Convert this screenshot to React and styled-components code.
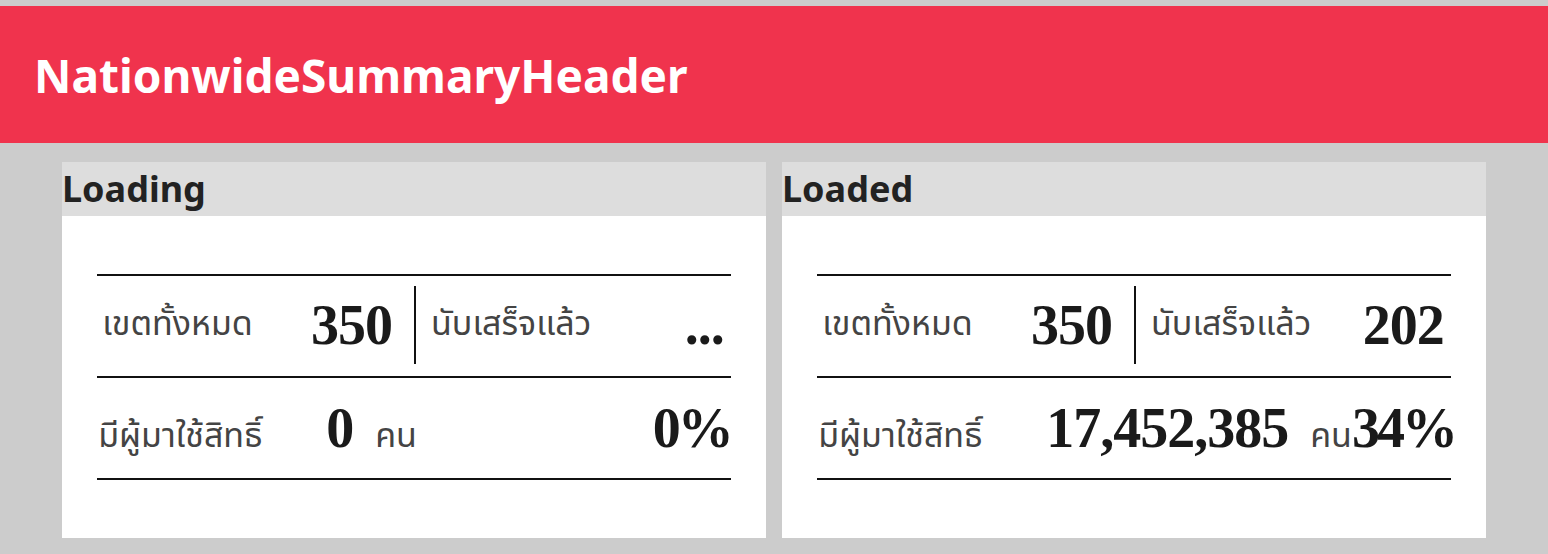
import React from 'react';
import styled, { createGlobalStyle } from 'styled-components';

const GlobalStyle = createGlobalStyle`
  html, body {
    margin: 0;
    padding: 0;
    background: #cccccc;
    font-family: "Noto Sans", "Open Sans", sans-serif;
  }
`;

const Page = styled.div`
  padding-top: 6px;
  padding-bottom: 16px;
`;

const Header = styled.header`
  height: 137px;
  background: #f0334d;
  display: flex;
  align-items: center;
  padding: 0 34px;
`;

const HeaderTitle = styled.h1`
  margin: 0;
  color: #ffffff;
  font-size: 46px;
  font-weight: 700;
  line-height: 1;
`;

const Cards = styled.div`
  display: grid;
  grid-template-columns: 1fr 1fr;
  gap: 16px;
  padding: 19px 62px 0;
`;

const Card = styled.section`
  background: #ffffff;
`;

const CardTitle = styled.h2`
  margin: 0;
  background: #dddddd;
  color: #222222;
  font-size: 36px;
  font-weight: 700;
  line-height: 54px;
  height: 54px;
`;

const Summary = styled.div`
  width: 90%;
  margin: 0 auto;
  padding: 58px 0 58px;
`;

const Row = styled.div`
  display: flex;
  align-items: ${(p) => (p.$split ? 'stretch' : 'center')};
  height: ${(p) => (p.$last ? '104px' : '102px')};
  border-top: 2px solid #111111;
  border-bottom: ${(p) => (p.$last ? '2px solid #111111' : 'none')};
  padding: ${(p) => (p.$split ? '10px 0 12px' : '0')};
  box-sizing: border-box;
`;

const Half = styled.div`
  flex: 0 0 50%;
  box-sizing: border-box;
  display: flex;
  align-items: center;
  justify-content: space-between;
  padding: ${(p) => (p.$right ? '0 7px 0 15px' : '0 22px 0 5px')};
  border-left: ${(p) => (p.$right ? '2px solid #111111' : 'none')};
`;

const Label = styled.span`
  color: #444444;
  font-family: "Noto Sans Thai", "Noto Sans Thai UI", "Noto Sans", sans-serif;
  font-size: 34px;
  line-height: 1;
  width: ${(p) => p.$width || 'auto'};
  flex-shrink: 0;
`;

const Unit = styled(Label)`
  margin-left: 22px;
`;

const Num = styled.span`
  font-family: "Liberation Serif", "Times New Roman", serif;
  font-weight: 700;
  font-size: 56px;
  letter-spacing: -1px;
  line-height: 1;
  color: #1a1a1a;
`;

const Percent = styled(Num)`
  flex: 1;
  text-align: right;
  white-space: nowrap;
  letter-spacing: -3px;
`;

const Voters = styled.div`
  display: flex;
  align-items: baseline;
  width: 100%;
  padding-left: 1px;
`;

function SummaryCard({ title, counted, voters, percent }) {
  return (
    <Card>
      <CardTitle>{title}</CardTitle>
      <Summary>
        <Row $split>
          <Half>
            <Label>เขตทั้งหมด</Label>
            <Num>350</Num>
          </Half>
          <Half $right>
            <Label>นับเสร็จแล้ว</Label>
            <Num>{counted}</Num>
          </Half>
        </Row>
        <Row $last>
          <Voters>
            <Label $width="228px">มีผู้มาใช้สิทธิ์</Label>
            <Num>{voters}</Num>
            <Unit>คน</Unit>
            <Percent>{percent}</Percent>
          </Voters>
        </Row>
      </Summary>
    </Card>
  );
}

export default function App() {
  return (
    <Page>
      <GlobalStyle />
      <Header>
        <HeaderTitle>NationwideSummaryHeader</HeaderTitle>
      </Header>
      <Cards>
        <SummaryCard title="Loading" counted="..." voters="0" percent="0%" />
        <SummaryCard title="Loaded" counted="202" voters="17,452,385" percent="34%" />
      </Cards>
    </Page>
  );
}
